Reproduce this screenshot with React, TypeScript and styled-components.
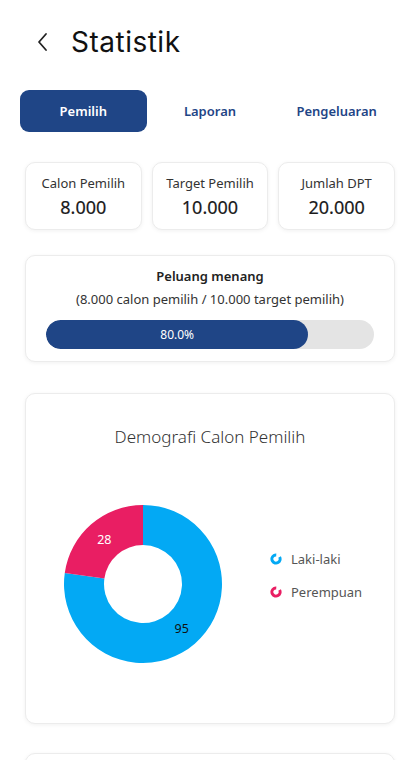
import React from "react";
import styled, { createGlobalStyle } from "styled-components";

const Global = createGlobalStyle`
  html, body { margin: 0; padding: 0; background: #ffffff; }
  body { font-family: "Noto Sans", "Open Sans", sans-serif; color: #222; }
  * { box-sizing: border-box; }
`;

const Page = styled.div`
  width: 420px;
  height: 760px;
  overflow: hidden;
  padding: 0 25px;
  display: flex;
  flex-direction: column;
  & > * { flex-shrink: 0; }
`;

const Header = styled.div`
  display: flex;
  align-items: center;
  height: 84px;
  padding-left: 8px;
  gap: 18px;
`;

const BackBtn = styled.button`
  background: none;
  border: none;
  padding: 0;
  width: 20px;
  height: 24px;
  display: flex;
  align-items: center;
  justify-content: center;
  cursor: pointer;
`;

const Title = styled.h1`
  margin: 0;
  font-family: "Inter", sans-serif;
  font-weight: 400;
  font-size: 28px;
  letter-spacing: 0.5px;
  color: #111;
`;

const Tabs = styled.div`
  display: grid;
  grid-template-columns: repeat(3, 1fr);
  margin: 6px -5px 0;
  height: 42px;
`;

const Tab = styled.button<{ $active?: boolean }>`
  border: none;
  border-radius: 9px;
  background: ${(p) => (p.$active ? "#1f4586" : "transparent")};
  color: ${(p) => (p.$active ? "#ffffff" : "#1f4586")};
  font-family: "Noto Sans", sans-serif;
  font-weight: 600;
  font-size: 13px;
  cursor: pointer;
`;

const StatRow = styled.div`
  display: grid;
  grid-template-columns: repeat(3, 1fr);
  gap: 10px;
  margin-top: 30px;
`;

const Card = styled.div`
  background: #fff;
  border: 1px solid #ececec;
  border-radius: 10px;
  box-shadow: 0 1px 4px rgba(0, 0, 0, 0.06);
`;

const StatCard = styled(Card)`
  height: 68px;
  display: flex;
  flex-direction: column;
  align-items: center;
  justify-content: center;
  gap: 2px;
`;

const StatLabel = styled.div`
  font-size: 13px;
  color: #333;
  line-height: 19px;
`;

const StatValue = styled.div`
  font-size: 18px;
  font-weight: 400;
  color: #1a1a1a;
  line-height: 24px;
  -webkit-text-stroke: 0.2px #1a1a1a;
`;

const ProgressCard = styled(Card)`
  margin-top: 25px;
  height: 107px;
  padding: 11px 20px 0;
  display: flex;
  flex-direction: column;
  align-items: center;
`;

const ProgressTitle = styled.div`
  font-size: 13px;
  font-weight: 600;
  color: #222;
  line-height: 18px;
`;

const ProgressSub = styled.div`
  font-size: 13px;
  color: #333;
  margin-top: 5px;
  line-height: 19px;
`;

const Track = styled.div`
  width: 100%;
  height: 29px;
  border-radius: 15px;
  background: #e4e4e4;
  margin-top: 11px;
  overflow: hidden;
`;

const Fill = styled.div`
  height: 100%;
  background: #1f4586;
  border-radius: 15px;
  color: #fff;
  font-size: 12px;
  display: flex;
  align-items: center;
  justify-content: center;
`;

const ChartCard = styled(Card)`
  margin-top: 31px;
  height: 331px;
  display: flex;
  flex-direction: column;
  align-items: center;
  padding-top: 31px;
`;

const ChartTitle = styled.div`
  font-size: 17px;
  font-weight: 300;
  color: #333;
  line-height: 24px;
`;

const ChartBody = styled.div`
  width: 100%;
  display: flex;
  align-items: center;
  margin-top: 55px;
  padding-left: 37px;
  gap: 47px;
`;

const Legend = styled.div`
  display: flex;
  flex-direction: column;
  gap: 14px;
  margin-bottom: 17px;
`;

const LegendItem = styled.div`
  display: flex;
  align-items: center;
  gap: 9px;
  font-size: 13px;
  color: #555;
  line-height: 19px;
`;

const NextCard = styled(Card)`
  margin-top: 29px;
  height: 120px;
`;

const ChevronLeft = () => (
  <svg width="14" height="20" viewBox="0 0 14 20">
    <path d="M10 2 L3 10 L10 18" fill="none" stroke="#222" strokeWidth="1.8" strokeLinecap="round" strokeLinejoin="round" />
  </svg>
);

const RingIcon = ({ color }: { color: string }) => (
  <svg width="12" height="12" viewBox="0 0 12 12">
    <circle
      cx="6"
      cy="6"
      r="4.1"
      fill="none"
      stroke={color}
      strokeWidth="3"
      strokeDasharray="21.2 4.6"
      transform="rotate(-30 6 6)"
    />
  </svg>
);

const polar = (cx: number, cy: number, r: number, deg: number) => {
  const a = (deg * Math.PI) / 180;
  return [cx + r * Math.sin(a), cy - r * Math.cos(a)];
};

const arcPath = (cx: number, cy: number, ro: number, ri: number, a0: number, a1: number) => {
  const [x0, y0] = polar(cx, cy, ro, a0);
  const [x1, y1] = polar(cx, cy, ro, a1);
  const [x2, y2] = polar(cx, cy, ri, a1);
  const [x3, y3] = polar(cx, cy, ri, a0);
  const large = a1 - a0 > 180 ? 1 : 0;
  return `M${x0} ${y0} A${ro} ${ro} 0 ${large} 1 ${x1} ${y1} L${x2} ${y2} A${ri} ${ri} 0 ${large} 0 ${x3} ${y3} Z`;
};

const Donut = () => {
  const data = [
    { v: 95, color: "#03a9f4", text: "#111" },
    { v: 28, color: "#e91e63", text: "#fff" },
  ];
  const total = data.reduce((s, d) => s + d.v, 0);
  const cx = 80;
  const cy = 80;
  const ro = 79;
  const ri = 39;
  let a = 0;
  return (
    <svg width="160" height="160" viewBox="0 0 160 160">
      {data.map((d, i) => {
        const a0 = a;
        const a1 = a + (d.v / total) * 360;
        a = a1;
        const [lx, ly] = polar(cx, cy, (ro + ri) / 2, (a0 + a1) / 2);
        return (
          <g key={i}>
            <path d={arcPath(cx, cy, ro, ri, a0, a1)} fill={d.color} />
            <text
              x={lx}
              y={ly}
              fill={d.text}
              fontSize="12.5"
              fontFamily="Noto Sans, sans-serif"
              textAnchor="middle"
              dominantBaseline="central"
            >
              {d.v}
            </text>
          </g>
        );
      })}
    </svg>
  );
};

export default function App() {
  const current = 8000;
  const target = 10000;
  const pct = (current / target) * 100;
  return (
    <>
      <Global />
      <Page>
        <Header>
          <BackBtn aria-label="back">
            <ChevronLeft />
          </BackBtn>
          <Title>Statistik</Title>
        </Header>
        <Tabs>
          <Tab $active>Pemilih</Tab>
          <Tab>Laporan</Tab>
          <Tab>Pengeluaran</Tab>
        </Tabs>
        <StatRow>
          <StatCard>
            <StatLabel>Calon Pemilih</StatLabel>
            <StatValue>8.000</StatValue>
          </StatCard>
          <StatCard>
            <StatLabel>Target Pemilih</StatLabel>
            <StatValue>10.000</StatValue>
          </StatCard>
          <StatCard>
            <StatLabel>Jumlah DPT</StatLabel>
            <StatValue>20.000</StatValue>
          </StatCard>
        </StatRow>
        <ProgressCard>
          <ProgressTitle>Peluang menang</ProgressTitle>
          <ProgressSub>(8.000 calon pemilih / 10.000 target pemilih)</ProgressSub>
          <Track>
            <Fill style={{ width: `${pct}%` }}>{pct.toFixed(1)}%</Fill>
          </Track>
        </ProgressCard>
        <ChartCard>
          <ChartTitle>Demografi Calon Pemilih</ChartTitle>
          <ChartBody>
            <Donut />
            <Legend>
              <LegendItem>
                <RingIcon color="#03a9f4" />
                Laki-laki
              </LegendItem>
              <LegendItem>
                <RingIcon color="#e91e63" />
                Perempuan
              </LegendItem>
            </Legend>
          </ChartBody>
        </ChartCard>
        <NextCard />
      </Page>
    </>
  );
}
